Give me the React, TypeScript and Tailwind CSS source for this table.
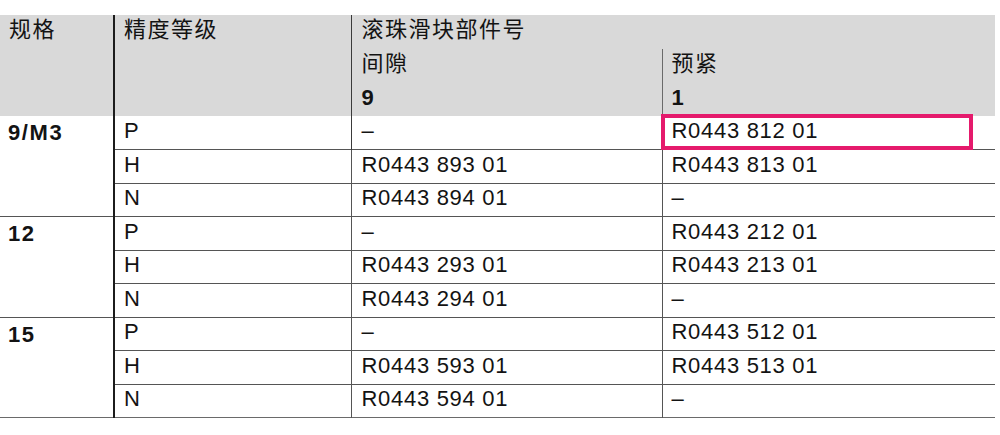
import React from "react";

type Row = [string, string, string];

interface Group {
  size: string;
  rows: Row[];
}

const groups: Group[] = [
  {
    size: "9/M3",
    rows: [
      ["P", "–", "R0443 812 01"],
      ["H", "R0443 893 01", "R0443 813 01"],
      ["N", "R0443 894 01", "–"],
    ],
  },
  {
    size: "12",
    rows: [
      ["P", "–", "R0443 212 01"],
      ["H", "R0443 293 01", "R0443 213 01"],
      ["N", "R0443 294 01", "–"],
    ],
  },
  {
    size: "15",
    rows: [
      ["P", "–", "R0443 512 01"],
      ["H", "R0443 593 01", "R0443 513 01"],
      ["N", "R0443 594 01", "–"],
    ],
  },
];

const font = "font-['Liberation_Sans','Noto_Sans_CJK_SC',sans-serif]";

export default function App() {
  return (
    <div className={`w-[1000px] h-[435px] bg-white pt-[15px] text-[#131313] ${font}`}>
      <div className="relative w-[995px]">
        <table className="w-[995px] table-fixed border-collapse text-[22px] leading-none tracking-[0.7px]">
          <colgroup>
            <col className="w-[114px]" />
            <col className="w-[237px]" />
            <col className="w-[311px]" />
            <col className="w-[333px]" />
          </colgroup>
          <thead className="bg-[#d9d9d9] font-normal">
            <tr className="h-[34px]">
              <th rowSpan={3} className="border-r-2 border-[#1c1c1c] pl-[9px] pt-[4px] text-left align-top font-normal tracking-[1.5px]">
                规格
              </th>
              <th rowSpan={3} className="border-r border-[#3a3a3a] pl-[9px] pt-[4px] text-left align-top font-normal tracking-[1.5px]">
                精度等级
              </th>
              <th colSpan={2} className="pl-[10px] pb-[5px] text-left align-middle font-normal tracking-[1.5px]">
                滚珠滑块部件号
              </th>
            </tr>
            <tr className="h-[34px]">
              <th className="pl-[10px] pb-[5px] text-left align-middle font-normal tracking-[1.5px]">间隙</th>
              <th className="border-l border-[#6a6a6a] pl-[9px] pb-[5px] text-left align-middle font-normal tracking-[1.5px]">
                预紧
              </th>
            </tr>
            <tr className="h-[33px]">
              <th className="pl-[10px] pb-[4px] text-left align-middle font-bold">9</th>
              <th className="border-l border-[#6a6a6a] pl-[9px] pb-[4px] text-left align-middle font-bold">1</th>
            </tr>
          </thead>
          <tbody>
            {groups.map((g, gi) =>
              g.rows.map((r, ri) => {
                const top = gi > 0 || ri > 0;
                const line = top ? "border-t border-[#555555]" : "";
                return (
                  <tr key={`${gi}-${ri}`} className="h-[33.5px]">
                    {ri === 0 && (
                      <td
                        rowSpan={3}
                        className={`border-r-2 border-[#1c1c1c] pl-[8px] pt-[6px] align-top font-bold tracking-[1.6px] ${gi > 0 ? "border-t border-t-[#555555]" : ""} ${gi === groups.length - 1 ? "border-b border-b-[#6a6a6a]" : ""}`}
                      >
                        {g.size}
                      </td>
                    )}
                    <td className={`border-r border-[#3a3a3a] pl-[9px] pb-[3px] align-middle ${line}`}>{r[0]}</td>
                    <td className={`border-r border-[#6a6a6a] pl-[10px] pb-[3px] align-middle ${line}`}>{r[1]}</td>
                    <td className={`pl-[9px] pb-[3px] align-middle ${line}`}>{r[2]}</td>
                  </tr>
                );
              })
            )}
          </tbody>
          <tfoot>
            <tr>
              <td colSpan={4} className="border-t border-[#6a6a6a] h-0 p-0" />
            </tr>
          </tfoot>
        </table>
        {/* highlight around the first preload part number */}
        <div className="pointer-events-none absolute left-[661px] top-[99px] h-[36px] w-[312px] border-4 border-[#e51a6c]" />
      </div>
    </div>
  );
}
